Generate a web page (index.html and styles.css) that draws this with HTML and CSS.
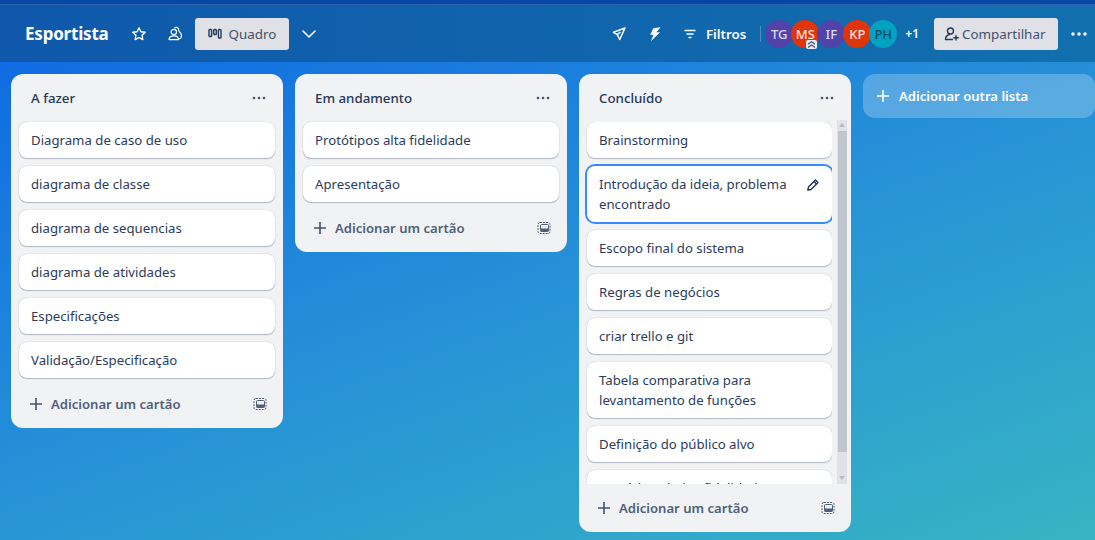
FILE: index.html
```
<!DOCTYPE html>
<html lang="pt-BR">
<head>
<meta charset="utf-8">
<title>Esportista</title>
<link rel="stylesheet" href="styles.css">
</head>
<body>
<div class="page">
  <div class="topstrip"></div>
  <header class="boardbar">
    <h1 class="title">Esportista</h1>
    <button class="iconbtn star"><svg width="16" height="16" viewBox="0 0 16 16"><path d="M8 1.800l1.900 3.900 4.300.6-3.100 3 .7 4.300L8 11.600l-3.800 2 .7-4.300-3.100-3 4.300-.6z" fill="none" stroke="#fff" stroke-width="1.400" stroke-linejoin="round"/></svg></button>
    <button class="iconbtn team"><svg width="16" height="16" viewBox="0 0 16 16" fill="none" stroke="#fff" stroke-width="1.200" stroke-linejoin="round"><circle cx="6.800" cy="6" r="2.700"/><path d="M2 13.600c.2-2.400 2-3.800 4.800-3.800s4.600 1.400 4.800 3.800z"/><path d="M7.500 2.300c.6-1 2.200-1.300 3.200-.5 1 .8 1 2 1.100 3 .1 1 1.700 1.600 2.300 3 .5 1.200.4 3-.2 4.200-.3.500-1 .6-2.200.6"/></svg></button>
    <button class="viewbtn"><svg width="14" height="12" viewBox="0 0 14 12" fill="none" stroke="#253858" stroke-width="1.400"><rect x="1" y="1.500" width="2.600" height="7" rx=".8"/><rect x="5.700" y="1.500" width="2.600" height="5" rx=".8"/><rect x="10.400" y="1.500" width="2.600" height="8.500" rx=".8"/></svg><span>Quadro</span></button>
    <button class="iconbtn chev"><svg width="16" height="10" viewBox="0 0 16 10"><path d="M2 2l6 6 6-6" fill="none" stroke="#fff" stroke-width="1.600" stroke-linecap="round" stroke-linejoin="round"/></svg></button>
    <div class="spacer"></div>
    <button class="iconbtn rocket"><svg width="16" height="16" viewBox="0 0 16 16"><path d="M14 2L2.500 6.300l3.700 2.400 2.500 4.800zM6.200 8.700L9.500 6" fill="none" stroke="#fff" stroke-width="1.500" stroke-linejoin="round"/></svg></button>
    <button class="iconbtn bolt"><svg width="16" height="16" viewBox="0 0 16 16"><path d="M13 1.500L6.500 2.500 3.500 8.500h3.300L4.500 14.500l8-8H9z" fill="#fff" stroke="#fff" stroke-width=".5" stroke-linejoin="round"/></svg></button>
    <button class="filters"><svg width="14" height="12" viewBox="0 0 14 12" stroke="#fff" stroke-width="1.300"><path d="M1.500 2.500h11M3.500 6h7M5.500 9.500h3"/></svg><span>Filtros</span></button>
    <div class="divider"></div>
    <div class="avatars">
      <span class="avatar purple">TG</span>
      <span class="avatar red">MS<svg class="badge" width="11" height="9" viewBox="0 0 11 9"><rect width="11" height="9" rx="2" fill="#e9ecf5"/><path d="M2 4.200l3.500-2.500L9 4.200M2 7.500L5.500 5 9 7.500" fill="none" stroke="#42526e" stroke-width="1.100"/></svg></span>
      <span class="avatar purple">IF</span>
      <span class="avatar red">KP</span>
      <span class="avatar teal">PH</span>
    </div>
    <span class="more">+1</span>
    <button class="share"><svg width="16" height="16" viewBox="0 0 16 16" fill="none" stroke="#253858" stroke-width="1.400" stroke-linecap="round"><circle cx="6.500" cy="5" r="3"/><path d="M1.500 13.500c0-3 2-4.500 4-5M1.500 13.500h7M12 9.500v4.500M9.700 11.800h4.600"/></svg><span>Compartilhar</span></button>
    <button class="iconbtn dots"><svg width="16" height="4" viewBox="0 0 16 4" fill="#fff"><circle cx="2" cy="2" r="1.700"/><circle cx="8" cy="2" r="1.700"/><circle cx="14" cy="2" r="1.700"/></svg></button>
  </header>

  <main class="board">
    <section class="list">
      <div class="listhead"><h2>A fazer</h2><svg class="listmenu" width="14" height="4" viewBox="0 0 14 4" fill="#42526e"><circle cx="2" cy="2" r="1.300"/><circle cx="7" cy="2" r="1.300"/><circle cx="12" cy="2" r="1.300"/></svg></div>
      <div class="cards spaced">
        <article class="card">Diagrama de caso de uso</article>
        <article class="card">diagrama de classe</article>
        <article class="card">diagrama de sequencias</article>
        <article class="card">diagrama de atividades</article>
        <article class="card">Especificações</article>
        <article class="card">Validação/Especificação</article>
      </div>
      <div class="listfoot"><svg class="plus" width="14" height="14" viewBox="0 0 14 14" stroke="#42526e" stroke-width="1.600"><path d="M7 1v12M1 7h12"/></svg><span>Adicionar um cartão</span><svg class="tmpl" width="14" height="14" viewBox="0 0 14 14" fill="none" stroke="#505f79"><rect x="1" y="1.500" width="12" height="11" rx="2" stroke-dasharray="2 1"/><rect x="3.500" y="3.500" width="8" height="7" rx="1"/><rect x="3.500" y="7.500" width="8" height="3" fill="#505f79" stroke="none"/></svg></div>
    </section>

    <section class="list">
      <div class="listhead"><h2>Em andamento</h2><svg class="listmenu" width="14" height="4" viewBox="0 0 14 4" fill="#42526e"><circle cx="2" cy="2" r="1.300"/><circle cx="7" cy="2" r="1.300"/><circle cx="12" cy="2" r="1.300"/></svg></div>
      <div class="cards spaced">
        <article class="card">Protótipos alta fidelidade</article>
        <article class="card">Apresentação</article>
      </div>
      <div class="listfoot"><svg class="plus" width="14" height="14" viewBox="0 0 14 14" stroke="#42526e" stroke-width="1.600"><path d="M7 1v12M1 7h12"/></svg><span>Adicionar um cartão</span><svg class="tmpl" width="14" height="14" viewBox="0 0 14 14" fill="none" stroke="#505f79"><rect x="1" y="1.500" width="12" height="11" rx="2" stroke-dasharray="2 1"/><rect x="3.500" y="3.500" width="8" height="7" rx="1"/><rect x="3.500" y="7.500" width="8" height="3" fill="#505f79" stroke="none"/></svg></div>
    </section>

    <section class="list">
      <div class="listhead"><h2>Concluído</h2><svg class="listmenu" width="14" height="4" viewBox="0 0 14 4" fill="#42526e"><circle cx="2" cy="2" r="1.300"/><circle cx="7" cy="2" r="1.300"/><circle cx="12" cy="2" r="1.300"/></svg></div>
      <div class="scrollarea">
        <div class="cards clipped">
          <article class="card">Brainstorming</article>
          <article class="card focus"><span>Introdução da ideia, problema encontrado</span><svg class="pencil" width="14" height="14" viewBox="0 0 14 14" fill="none" stroke="#172b4d" stroke-width="1.300" stroke-linejoin="round"><path d="M9.500 2l2.500 2.500-7 7-3.200.7.700-3.200z"/><path d="M8 3.500L10.500 6"/></svg></article>
          <article class="card">Escopo final do sistema</article>
          <article class="card">Regras de negócios</article>
          <article class="card">criar trello e git</article>
          <article class="card">Tabela comparativa para levantamento de funções</article>
          <article class="card">Definição do público alvo</article>
          <article class="card">Protótipos baixa fidelidade</article>
        </div>
        <div class="scrollbar"><i class="arrow up"></i><div class="thumb"></div><i class="arrow down"></i></div>
      </div>
      <div class="listfoot"><svg class="plus" width="14" height="14" viewBox="0 0 14 14" stroke="#42526e" stroke-width="1.600"><path d="M7 1v12M1 7h12"/></svg><span>Adicionar um cartão</span><svg class="tmpl" width="14" height="14" viewBox="0 0 14 14" fill="none" stroke="#505f79"><rect x="1" y="1.500" width="12" height="11" rx="2" stroke-dasharray="2 1"/><rect x="3.500" y="3.500" width="8" height="7" rx="1"/><rect x="3.500" y="7.500" width="8" height="3" fill="#505f79" stroke="none"/></svg></div>
    </section>

    <button class="addlist"><svg width="14" height="14" viewBox="0 0 14 14" stroke="#fff" stroke-width="1.600"><path d="M7 1v12M1 7h12"/></svg><span>Adicionar outra lista</span></button>
  </main>
</div>
</body>
</html>
```
FILE: styles.css
```
* { box-sizing: border-box; }
html, body { margin: 0; height: 100%; }
body { font-family: "Noto Sans", "Open Sans", sans-serif; color: #172b4d; overflow: hidden; }
button { font: inherit; border: 0; background: none; padding: 0; cursor: pointer; }
.page {
  width: 1095px; height: 540px; overflow: hidden;
  display: flex; flex-direction: column;
  background: linear-gradient(160deg, #0c66e4 0%, #2590d8 50%, #37b4c3 100%);
}
.topstrip { height: 5px; background: #0747a6; border-bottom: 1px solid #2a62ad; flex: none; }
.boardbar {
  height: 57px; flex: none; display: flex; align-items: center;
  padding: 0 8px 0 25px; background: linear-gradient(90deg, #0f58ab, #1270ae);
}
.title { margin: 0; font-size: 17px; font-weight: 700; color: #fff; letter-spacing: -.2px; line-height: 24px; }
.iconbtn { display: flex; align-items: center; justify-content: center; }
.star { margin-left: 22px; width: 16px; }
.team { margin-left: 20px; width: 16px; }
.viewbtn {
  margin-left: 12px; width: 94px; height: 32px; border-radius: 3px; background: #dfe1e6;
  display: flex; align-items: center; gap: 7px; padding-left: 13px; font-size: 13.400px; color: #42526e;
}
.chev { margin-left: 12px; width: 16px; }
.spacer { flex: 1; }
.rocket { width: 16px; }
.bolt { margin-left: 20px; width: 16px; }
.filters { margin-left: 20px; display: flex; align-items: center; gap: 9px; color: #fff; font-size: 13.300px; font-weight: 600; }
.divider { width: 1px; height: 16px; background: #ffffff40; margin-left: 14px; }
.avatars { display: flex; margin-left: 4px; }
.avatar {
  position: relative; width: 28px; height: 28px; border-radius: 50%; margin-right: -2px;
  display: flex; align-items: center; justify-content: center; font-size: 13px; font-weight: 500;
  color: #fff;
}
.purple { background: #5243aa; color: #dcdcf5; }
.red { background: #de350b; color: #ffe6e0; }
.teal { background: #00a3bf; color: #0b4a66; }
.badge { position: absolute; right: 2px; bottom: -1px; }
.more { margin-left: 10px; color: #fff; font-size: 12px; font-weight: 600; }
.share {
  margin-left: 15px; width: 124px; height: 32px; border-radius: 3px; background: #dfe1e6;
  display: flex; align-items: center; gap: 2px; padding-left: 10px; font-size: 13.400px; color: #42526e;
}
.dots { margin-left: 13px; width: 16px; }

.board { flex: 1; min-height: 0; display: flex; align-items: flex-start; gap: 12px; padding: 12px 0 0 11px; }
.list { width: 272px; flex: none; background: #f1f2f4; border-radius: 12px; display: flex; flex-direction: column; }
.listhead { height: 48px; display: flex; align-items: center; justify-content: space-between; padding: 0 17px 0 20px; }
.listhead h2 { margin: 0; font-size: 13.300px; font-weight: 500; color: #253858; }
.cards { display: flex; flex-direction: column; gap: 8px; padding: 0 8px; }
.spaced { margin-bottom: 2px; }
.card {
  background: #fff; border-radius: 8px; padding: 8px 12px; min-height: 36px;
  font-size: 13.200px; line-height: 20px; color: #2c3c5a; box-shadow: 0 1px 1px #091e4240, 0 0 1px #091e424f;
  flex: none; display: flex; justify-content: space-between; align-items: flex-start;
}
.focus { position: relative; box-shadow: 0 0 0 2px #388bff; }
.pencil { position: absolute; right: 12px; top: 12px; }
.focus span { width: 200px; }
.listfoot { height: 48px; display: flex; align-items: center; padding: 0 16px 0 18px; font-size: 13.100px; font-weight: 600; color: #505f79; }
.listfoot span { margin-left: 8px; flex: 1; }
.plus { flex: none; }
.scrollarea { display: flex; height: 362px; }
.clipped { width: 253px; padding-right: 0; overflow: hidden; }
.scrollbar { width: 10px; height: 364px; margin: -2px 0 0 5px; background: #e0e2e7; display: flex; flex-direction: column; align-items: center; }
.thumb { flex: none; height: 321px; width: 9px; background: #c1c5cd; margin-top: 4px; }
.arrow { width: 0; height: 0; border-left: 3px solid transparent; border-right: 3px solid transparent; flex: none; margin-top: 3px; }
.arrow.up { border-bottom: 4px solid #b6bac2; }
.arrow.down { border-top: 4px solid #b6bac2; margin-top: auto; margin-bottom: 4px; }
.addlist {
  width: 232px; height: 44px; background: #ffffff3d; border-radius: 12px; flex: none;
  display: flex; align-items: center; gap: 9px; padding: 0 0 0 13px;
  color: #fff; font-size: 13.100px; font-weight: 600;
}
```
